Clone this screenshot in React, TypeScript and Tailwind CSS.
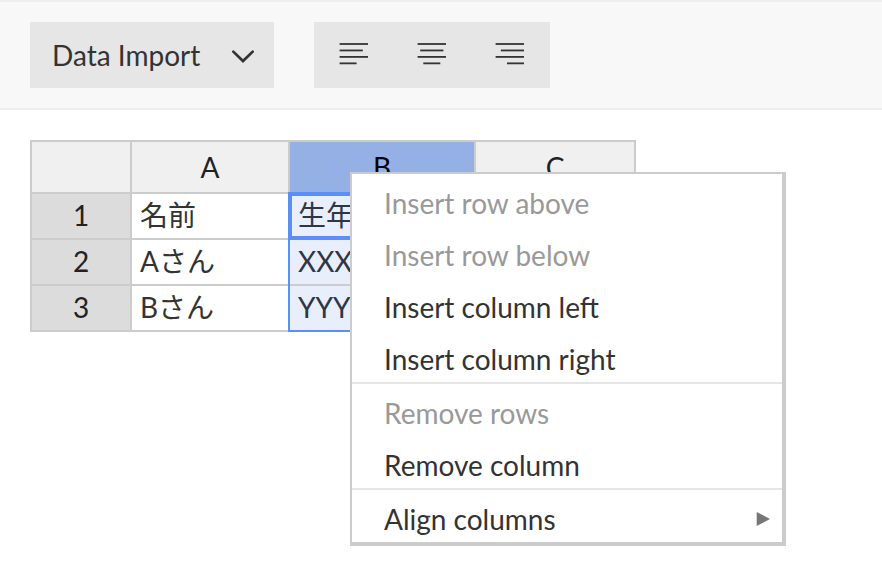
import React from "react";

type MenuEntry = { label: string; disabled?: boolean; submenu?: boolean };

const columns = ["A", "B", "C"];

const rows = [
  ["名前", "生年", ""],
  ["Aさん", "XXX", ""],
  ["Bさん", "YYY", ""],
];

const menuGroups: MenuEntry[][] = [
  [
    { label: "Insert row above", disabled: true },
    { label: "Insert row below", disabled: true },
    { label: "Insert column left" },
    { label: "Insert column right" },
  ],
  [{ label: "Remove rows", disabled: true }, { label: "Remove column" }],
  [{ label: "Align columns", submenu: true }],
];

const alignIcons = [
  { label: "Align left", lines: [[0, 28.4], [0, 23.2], [0, 28.4], [0, 17]] },
  { label: "Align center", lines: [[0, 28.4], [2.6, 25.8], [0, 28.4], [5.7, 22.7]] },
  { label: "Align right", lines: [[0, 28.4], [5.2, 28.4], [0, 28.4], [11.4, 28.4]] },
];

function AlignIcon({ lines }: { lines: number[][] }) {
  return (
    <svg width="30" height="24" viewBox="-0.6 0 30 24" fill="#333" aria-hidden="true">
      {lines.map(([from, to], i) => (
        <rect key={i} x={from} y={0.1 + i * 6.45} width={to - from} height="1.8" />
      ))}
    </svg>
  );
}

function Toolbar() {
  return (
    <header className="flex gap-10 border-y-2 border-[#eeeeee] bg-[#f8f8f8] px-[30px] py-5">
      <button
        type="button"
        aria-haspopup="menu"
        className="flex h-[66px] items-center gap-[30px] bg-[#e6e6e6] pr-5 pl-[22px]"
      >
        <span>Data Import</span>
        <svg width="24" height="16" viewBox="0 0 24 16" fill="none" aria-hidden="true">
          <path d="M3.3 4.6 L13 14 L22.7 4.6" stroke="#333" strokeWidth="2.7" strokeLinecap="round" />
        </svg>
      </button>
      <div role="group" aria-label="Alignment" className="flex h-[66px] bg-[#e6e6e6] px-px">
        {alignIcons.map((icon) => (
          <button
            key={icon.label}
            type="button"
            aria-label={icon.label}
            className="flex w-[78px] items-center justify-center"
          >
            <AlignIcon lines={icon.lines} />
          </button>
        ))}
      </div>
    </header>
  );
}

function Sheet() {
  return (
    <table className="w-[606px] table-fixed border-separate border-spacing-0 border-t-2 border-l-2 border-[#cccccc]">
      <colgroup>
        <col className="w-[100px]" />
        <col className="w-[158px]" />
        <col className="w-[186px]" />
        <col className="w-[160px]" />
      </colgroup>
      <thead>
        <tr className="h-[52px] text-[#222222]">
          <td className="border-r-2 border-b-2 border-[#cccccc] bg-[#f0f0f0]" />
          {columns.map((name) => (
            <th
              key={name}
              scope="col"
              className={`border-r-2 border-b-2 border-[#cccccc] p-0 font-normal ${
                name === "B" ? "bg-[#95b0e4] text-black" : "bg-[#f0f0f0]"
              }`}
            >
              {name}
            </th>
          ))}
        </tr>
      </thead>
      <tbody>
        {rows.map((cells, r) => (
          <tr key={r} className="h-[46px]">
            <th
              scope="row"
              className="border-r-2 border-b-2 border-[#cccccc] bg-[#dcdcdc] px-0 pt-0 pb-0.5 font-normal text-[#222222]"
            >
              {r + 1}
            </th>
            {cells.map((text, c) => (
              <td
                key={c}
                className={`border-r-2 border-b-2 border-[#cccccc] px-2 pt-0 pb-0.5 ${
                  c === 1 ? "bg-[#e8eefc] text-[#2f3542]" : ""
                }`}
              >
                {text}
              </td>
            ))}
          </tr>
        ))}
      </tbody>
    </table>
  );
}

function ContextMenu() {
  return (
    <div
      role="menu"
      className="absolute top-8 left-80 w-[436px] divide-y-2 divide-[#e5e5e5] border-t-2 border-r-4 border-b-4 border-l-2 border-[#cccccc] bg-white"
    >
      {menuGroups.map((group, i) => (
        <div key={i} role="group">
          {group.map((item) => (
            <button
              key={item.label}
              type="button"
              role="menuitem"
              disabled={item.disabled}
              className="flex h-[52px] w-full items-center justify-between pt-1.5 pr-3 pl-8 text-left disabled:text-[#999999]"
            >
              <span>{item.label}</span>
              {item.submenu && (
                <svg width="14" height="14" viewBox="0 0 14 14" fill="#777" aria-hidden="true">
                  <path d="M0.7 0 L14 7 L0.7 14 Z" />
                </svg>
              )}
            </button>
          ))}
        </div>
      ))}
    </div>
  );
}

export default function App() {
  return (
    <div className="min-h-screen bg-white font-[Lato,'Noto_Sans_CJK_JP',sans-serif] text-[28px] leading-10 text-[#333333]">
      <Toolbar />
      <main className="px-[30px] pt-[30px]">
        <div className="relative">
          <Sheet />
          <div className="pointer-events-none absolute top-[52px] left-[258px] h-[140px] w-[188px] border-2 border-[#5b8ff5]" />
          <div className="pointer-events-none absolute top-[52px] left-[258px] h-12 w-[188px] border-4 border-[#5b8ff5]" />
          <ContextMenu />
        </div>
      </main>
    </div>
  );
}
